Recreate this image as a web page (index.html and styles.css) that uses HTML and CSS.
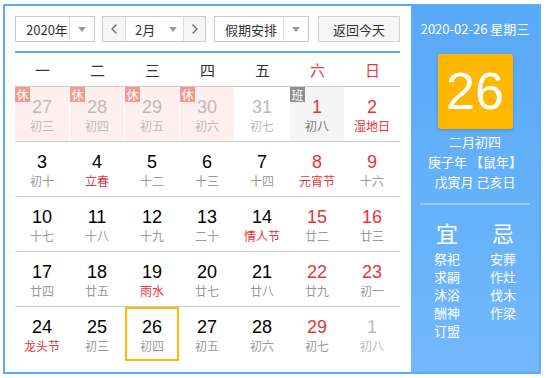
FILE: index.html
```html
<!DOCTYPE html>
<html lang="zh-CN">
<head>
<meta charset="utf-8">
<title>万年历</title>
<link rel="stylesheet" href="styles.css">
</head>
<body>
<div class="cal">
  <div class="main">
    <div class="toolbar">
      <div class="sel sel-year"><span class="sel-text">2020年</span><span class="sel-arrow"><span class="tri"></span></span></div>
      <div class="monthgrp">
        <span class="nav nav-prev"><svg width="6" height="10" viewBox="0 0 6 10"><polyline points="5.5,0.5 1,5 5.5,9.5" fill="none" stroke="#666" stroke-width="1.2"/></svg></span>
        <span class="mid"><span>2月</span><span class="tri"></span></span>
        <span class="nav nav-next"><svg width="6" height="10" viewBox="0 0 6 10"><polyline points="0.5,0.5 5,5 0.5,9.5" fill="none" stroke="#666" stroke-width="1.2"/></svg></span>
      </div>
      <div class="sel sel-hol"><span class="sel-text">假期安排</span><span class="sel-arrow"><span class="tri"></span></span></div>
      <div class="btn">返回今天</div>
    </div>
    <div class="week">
      <span>一</span><span>二</span><span>三</span><span>四</span><span>五</span><span class="red">六</span><span class="red">日</span>
    </div>
    <div class="rows">
      <div class="row">
        <div class="cell off rest"><span class="badge">休</span><span class="n">27</span><span class="l">初三</span></div>
        <div class="cell off rest"><span class="badge">休</span><span class="n">28</span><span class="l">初四</span></div>
        <div class="cell off rest"><span class="badge">休</span><span class="n">29</span><span class="l">初五</span></div>
        <div class="cell off rest"><span class="badge">休</span><span class="n">30</span><span class="l">初六</span></div>
        <div class="cell off"><span class="n">31</span><span class="l">初七</span></div>
        <div class="cell work we"><span class="badge badge-work">班</span><span class="n">1</span><span class="l">初八</span></div>
        <div class="cell we"><span class="n">2</span><span class="l fest">湿地日</span></div>
      </div>
      <div class="row">
        <div class="cell"><span class="n">3</span><span class="l">初十</span></div>
        <div class="cell"><span class="n">4</span><span class="l fest">立春</span></div>
        <div class="cell"><span class="n">5</span><span class="l">十二</span></div>
        <div class="cell"><span class="n">6</span><span class="l">十三</span></div>
        <div class="cell"><span class="n">7</span><span class="l">十四</span></div>
        <div class="cell we"><span class="n">8</span><span class="l fest">元宵节</span></div>
        <div class="cell we"><span class="n">9</span><span class="l">十六</span></div>
      </div>
      <div class="row">
        <div class="cell"><span class="n">10</span><span class="l">十七</span></div>
        <div class="cell"><span class="n">11</span><span class="l">十八</span></div>
        <div class="cell"><span class="n">12</span><span class="l">十九</span></div>
        <div class="cell"><span class="n">13</span><span class="l">二十</span></div>
        <div class="cell"><span class="n">14</span><span class="l fest">情人节</span></div>
        <div class="cell we"><span class="n">15</span><span class="l">廿二</span></div>
        <div class="cell we"><span class="n">16</span><span class="l">廿三</span></div>
      </div>
      <div class="row">
        <div class="cell"><span class="n">17</span><span class="l">廿四</span></div>
        <div class="cell"><span class="n">18</span><span class="l">廿五</span></div>
        <div class="cell"><span class="n">19</span><span class="l fest">雨水</span></div>
        <div class="cell"><span class="n">20</span><span class="l">廿七</span></div>
        <div class="cell"><span class="n">21</span><span class="l">廿八</span></div>
        <div class="cell we"><span class="n">22</span><span class="l">廿九</span></div>
        <div class="cell we"><span class="n">23</span><span class="l">初一</span></div>
      </div>
      <div class="row">
        <div class="cell"><span class="n">24</span><span class="l fest">龙头节</span></div>
        <div class="cell"><span class="n">25</span><span class="l">初三</span></div>
        <div class="cell today"><span class="n">26</span><span class="l">初四</span></div>
        <div class="cell"><span class="n">27</span><span class="l">初五</span></div>
        <div class="cell"><span class="n">28</span><span class="l">初六</span></div>
        <div class="cell we"><span class="n">29</span><span class="l">初七</span></div>
        <div class="cell off"><span class="n">1</span><span class="l">初八</span></div>
      </div>
    </div>
  </div>
  <div class="side">
    <div class="s-date">2020-02-26 星期三</div>
    <div class="s-day">26</div>
    <div class="s-lunar">
      <div>二月初四</div>
      <div>庚子年 【鼠年】</div>
      <div>戊寅月 己亥日</div>
    </div>
    <div class="s-line"></div>
    <div class="yiji">
      <div class="col">
        <div class="yj-title">宜</div>
        <div>祭祀</div><div>求嗣</div><div>沐浴</div><div>酬神</div><div>订盟</div>
      </div>
      <div class="col">
        <div class="yj-title">忌</div>
        <div>安葬</div><div>作灶</div><div>伐木</div><div>作梁</div>
      </div>
    </div>
  </div>
</div>
</body>
</html>
```
FILE: styles.css
```css
html, body {
  margin: 0;
  padding: 0;
  background: #fff;
}
body {
  font-family: "Noto Sans CJK SC", "Noto Sans", sans-serif;
  color: #333;
}
.cal {
  box-sizing: border-box;
  margin: 4px 0 0 3px;
  width: 538px;
  height: 370px;
  border: 2px solid #5aabf8;
  display: flex;
}
.main {
  box-sizing: border-box;
  width: 406px;
  padding: 10px 11px 10px 10px;
}
.toolbar {
  display: flex;
  align-items: flex-start;
  padding-bottom: 9px;
  border-bottom: 2px solid #5aabf8;
  font-size: 13px;
  color: #333;
}
.sel, .monthgrp, .btn {
  box-sizing: border-box;
  height: 26px;
  border: 1px solid #c9c9c9;
  display: flex;
  align-items: stretch;
}
.sel-text {
  flex: 1;
  display: flex;
  align-items: center;
  padding-left: 10px;
}
.sel-arrow {
  width: 24px;
  border-left: 1px solid #dcdcdc;
  display: flex;
  align-items: center;
  justify-content: center;
}
.tri {
  width: 0;
  height: 0;
  border-left: 4px solid transparent;
  border-right: 4px solid transparent;
  border-top: 5px solid #999;
}
.sel-year { width: 80px; }
.monthgrp { width: 104px; margin-left: 7px; }
.sel-hol { width: 95px; margin-left: 8px; }
.btn {
  width: 82px;
  margin-left: 9px;
  background: #f6f6f6;
  border-color: #d2d2d2;
  align-items: center;
  justify-content: center;
}
.nav {
  background: #f6f6f6;
  display: flex;
  align-items: center;
  justify-content: center;
}
.nav-prev { width: 22px; border-right: 1px solid #dcdcdc; }
.nav-next { width: 21px; border-left: 1px solid #dcdcdc; }
.mid {
  flex: 1;
  display: flex;
  align-items: center;
  justify-content: space-between;
  padding: 0 6px 0 9px;
}
.week {
  display: grid;
  grid-template-columns: repeat(7, 55px);
  height: 33px;
  border-bottom: 1px solid #cccccc;
  font-size: 15px;
  color: #333;
}
.week span {
  display: flex;
  align-items: center;
  justify-content: center;
}
.week .red { color: #e53a3a; }
.row {
  display: grid;
  grid-template-columns: repeat(7, 55px);
  height: 54px;
  border-bottom: 1px solid #cccccc;
}
.row:last-child { border-bottom: none; }
.cell {
  position: relative;
  width: 54px;
  height: 54px;
  box-sizing: border-box;
  padding-top: 9px;
  display: flex;
  flex-direction: column;
  align-items: center;
}
.n {
  font-family: "Liberation Sans", Arial, sans-serif;
  font-size: 18px;
  line-height: 22px;
  color: #000;
}
.l {
  font-size: 12px;
  line-height: 16px;
  color: #999;
}
.we .n { color: #e5343a; }
.l.fest { color: #e5343a; }
.off .n { color: #bbb; }
.off .l { color: #bbb; }
.rest { background: #fff0ef; }
.work { background: #f5f5f5; }
.work .l { color: #777; }
.badge {
  position: absolute;
  left: 0;
  top: 0;
  width: 15px;
  height: 15px;
  line-height: 15px;
  text-align: center;
  font-size: 12px;
  color: #fff;
  background: #f5998c;
}
.badge-work { background: #8e8e8e; }
.today { box-shadow: inset 0 0 0 2px #ffb800; }
.side {
  width: 128px;
  background: linear-gradient(#58a9f8, #72b8fd);
  color: #fff;
  display: flex;
  flex-direction: column;
  align-items: center;
  padding-top: 14px;
  box-sizing: border-box;
}
.s-date {
  font-size: 13px;
  line-height: 18px;
}
.s-day {
  margin-top: 16px;
  width: 75px;
  height: 75px;
  background: #ffb800;
  border-radius: 3px;
  box-shadow: 0 1px 3px rgba(0, 0, 0, 0.2);
  font-family: "Liberation Sans", Arial, sans-serif;
  font-size: 52px;
  line-height: 75px;
  text-align: center;
}
.s-lunar {
  margin-top: 3px;
  font-size: 13px;
  line-height: 20px;
  text-align: center;
}
.s-line {
  margin-top: 11px;
  width: 110px;
  height: 2px;
  background: rgba(255, 255, 255, 0.35);
}
.yiji {
  margin-top: 13px;
  display: flex;
  justify-content: center;
}
.col {
  width: 56px;
  text-align: center;
  font-size: 13px;
  line-height: 18px;
}
.yj-title {
  font-size: 22px;
  line-height: 28px;
  margin-bottom: 4px;
}
```
